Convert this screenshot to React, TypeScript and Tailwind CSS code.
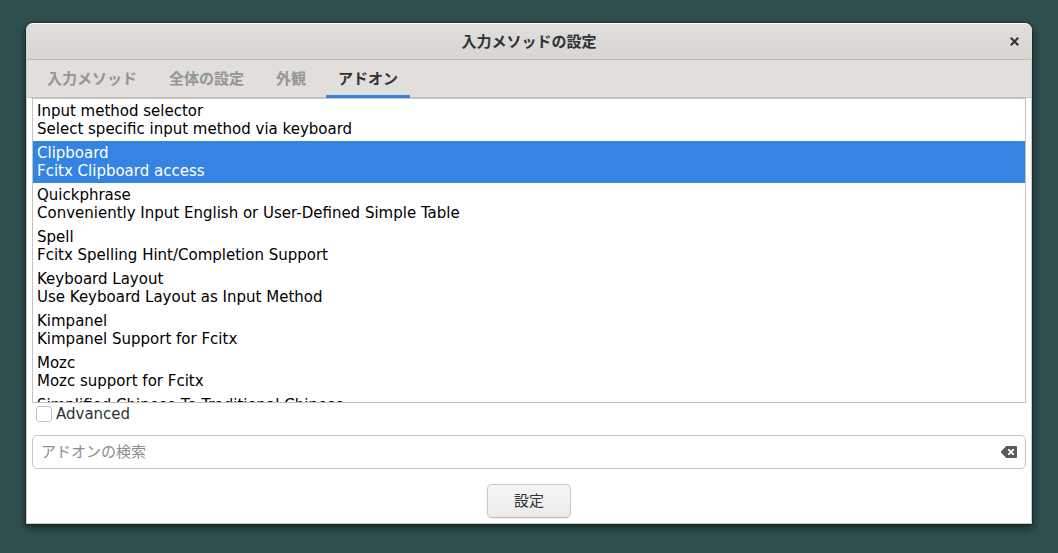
import { useState } from "react";

const tabs = ["入力メソッド", "全体の設定", "外観", "アドオン"];

const addons = [
  { name: "Input method selector", description: "Select specific input method via keyboard" },
  { name: "Clipboard", description: "Fcitx Clipboard access" },
  { name: "Quickphrase", description: "Conveniently Input English or User-Defined Simple Table" },
  { name: "Spell", description: "Fcitx Spelling Hint/Completion Support" },
  { name: "Keyboard Layout", description: "Use Keyboard Layout as Input Method" },
  { name: "Kimpanel", description: "Kimpanel Support for Fcitx" },
  { name: "Mozc", description: "Mozc support for Fcitx" },
  { name: "Simplified Chinese To Traditional Chinese", description: "" },
];

function TitleBar() {
  return (
    <header className="grid h-9 shrink-0 grid-cols-[1fr_auto_1fr] items-center rounded-t-[7px] border-t border-white bg-linear-to-b from-[#e0dddb] to-[#d9d5d1] px-2">
      <h1 className="col-start-2 font-bold text-[#2e3436]">入力メソッドの設定</h1>
      <button type="button" aria-label="閉じる" className="flex size-5 items-center justify-center justify-self-end text-[#2e3436]">
        <svg viewBox="0 0 9 9" className="size-[9px]" fill="none" stroke="currentColor" strokeWidth="2.1">
          <path d="M0.8 0.8 8.2 8.2M8.2 0.8 0.8 8.2" />
        </svg>
      </button>
    </header>
  );
}

function TabBar({ active, onSelect }: { active: string; onSelect: (tab: string) => void }) {
  return (
    <div role="tablist" className="flex h-[39px] shrink-0 gap-2 border-y border-t-[#bfb8b1] border-b-[#c8c2bd] bg-[#e1dedb] px-2">
      {tabs.map((tab) => (
        <button
          key={tab}
          type="button"
          role="tab"
          aria-selected={tab === active}
          onClick={() => onSelect(tab)}
          className={
            tab === active
              ? "-mb-px border-b-3 border-[#3584e4] px-3 pt-[2px] font-bold text-[#2e3436]"
              : "-mb-px border-b-3 border-transparent px-3 pt-[2px] font-bold text-[#929595]"
          }
        >
          {tab}
        </button>
      ))}
    </div>
  );
}

function AddonList() {
  const [selected, setSelected] = useState("Clipboard");
  return (
    <ul role="listbox" aria-label="アドオン" className="min-h-0 flex-1 overflow-y-auto border border-[#c6c2bf] bg-white [scrollbar-width:none]">
      {addons.map(({ name, description }) => (
        <li
          key={name}
          role="option"
          aria-selected={name === selected}
          onClick={() => setSelected(name)}
          className={
            name === selected
              ? "bg-[#3584e4] px-1 py-[3px] leading-[18px] text-white"
              : "px-1 py-[3px] leading-[18px] text-black"
          }
        >
          <p>{name}</p>
          {description && <p>{description}</p>}
        </li>
      ))}
    </ul>
  );
}

export default function App() {
  const [active, setActive] = useState("アドオン");
  const [query, setQuery] = useState("");
  return (
    <div className="flex h-screen flex-col bg-[#2f4f4f] px-[26px] pt-[23px] pb-[29px] font-['DejaVu_Sans','Noto_Sans_CJK_JP',sans-serif] text-[15px] leading-[18px]">
      <main className="flex min-h-0 flex-1 flex-col rounded-t-[8px] shadow-[0_3px_9px_1px_rgba(0,0,0,0.5),0_0_0_1px_rgba(0,0,0,0.23)]">
        <TitleBar />
        <section className="flex min-h-0 flex-1 flex-col border border-t-0 border-[#cfcbc8] bg-white">
          <TabBar active={active} onSelect={setActive} />
          <div className="flex min-h-0 flex-1 flex-col px-[5px] pb-[5px]">
            <AddonList />
            <label className="mt-[2px] flex items-center gap-1 self-start px-1 text-[#2e3436]">
              <input type="checkbox" className="size-4 appearance-none rounded-[3px] border border-[#c9c3be] bg-white checked:bg-[#3584e4]" />
              Advanced
            </label>
            <div className="mt-3 flex h-[34px] shrink-0 items-center rounded-[5px] border border-[#c9c5c1] bg-white px-2">
              <input
                type="text"
                aria-label="アドオンの検索"
                placeholder="アドオンの検索"
                value={query}
                onChange={(event) => setQuery(event.target.value)}
                className="min-w-0 flex-1 text-[#2e3436] outline-none placeholder:text-[#8b8e8f]"
              />
              <button type="button" aria-label="消去" onClick={() => setQuery("")} className="text-[#585c5a]">
                <svg viewBox="0 0 16 12" className="h-3 w-4" fill="currentColor">
                  <path fillRule="evenodd" d="M5.2 0H15a1 1 0 0 1 1 1v10a1 1 0 0 1-1 1H5.2L0 6.5v-1ZM7 3v1.3L8.700 6 7 7.700V9h1.300L10 7.300 11.700 9H13V7.700L11.300 6 13 4.300V3h-1.300L10 4.700 8.300 3Z" />
                </svg>
              </button>
            </div>
            <button
              type="button"
              className="mt-[15px] h-[34px] shrink-0 self-center rounded-[5px] border border-[#cdc7c2] border-b-[#bfb8b1] bg-linear-to-b from-[#f6f5f4] to-[#edebe9] px-[26px] text-[#2e3436] shadow-[0_1px_2px_rgba(0,0,0,0.07)]"
            >
              設定
            </button>
          </div>
        </section>
      </main>
    </div>
  );
}
